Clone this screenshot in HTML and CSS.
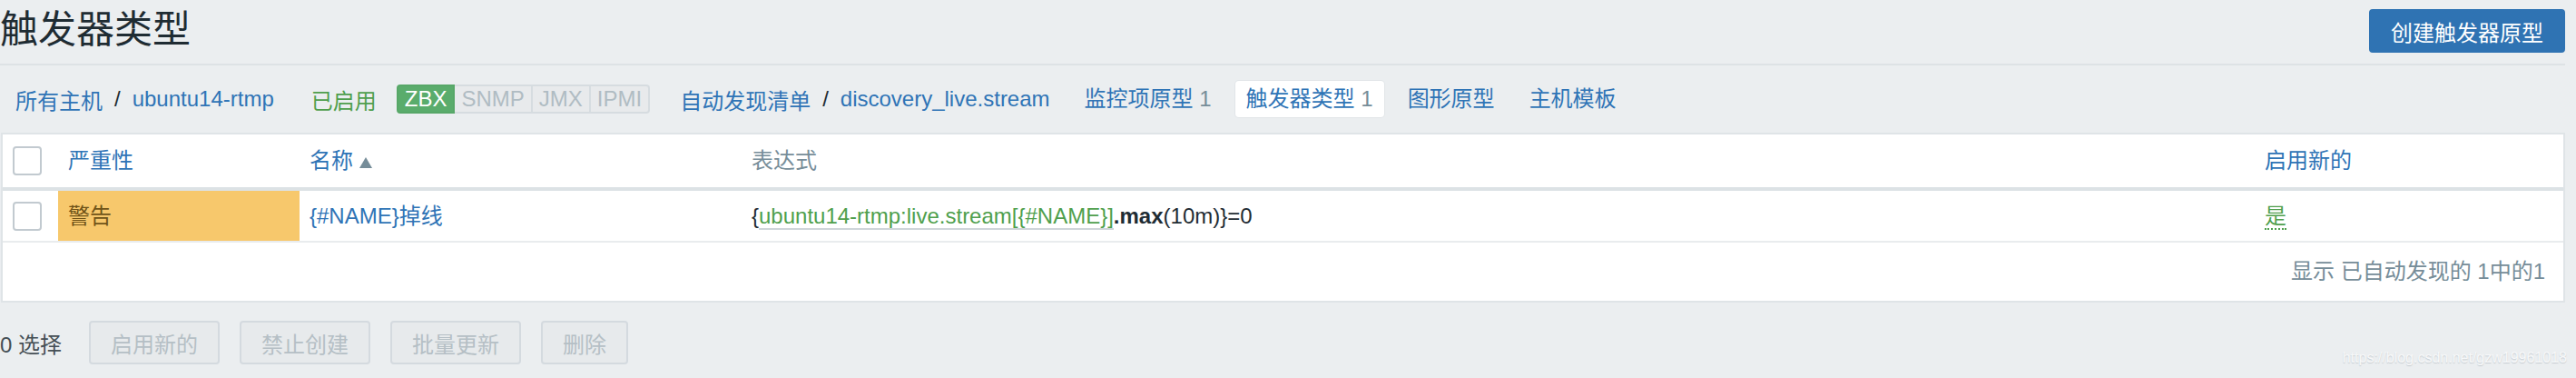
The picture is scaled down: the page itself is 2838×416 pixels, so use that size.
FILE: index.html
```html
<html lang="zh-CN">
<head>
    <meta charset="UTF-8">
    <title>触发器类型</title>
    <link rel="stylesheet" href="styles.css">
</head>
<body>
    <div class="page">
        <header class="page-header">
            <h1>触发器类型</h1>
            <button class="btn-create">创建触发器原型</button>
        </header>

        <nav class="host-nav">
            <div class="crumbs first">
                <a href="#">所有主机</a>
                <span class="sep">/</span>
                <a href="#">ubuntu14-rtmp</a>
            </div>
            <span class="status-on">已启用</span>
            <div class="tags">
                <span class="tag tag-on">ZBX</span>
                <span class="tag">SNMP</span>
                <span class="tag">JMX</span>
                <span class="tag">IPMI</span>
            </div>
            <div class="crumbs second">
                <a href="#">自动发现清单</a>
                <span class="sep">/</span>
                <a href="#">discovery_live.stream</a>
            </div>
            <ul class="tabs">
                <li><a href="#">监控项原型 <sup>1</sup></a></li>
                <li class="active"><a href="#">触发器类型 <sup>1</sup></a></li>
                <li><a href="#">图形原型</a></li>
                <li><a href="#">主机模板</a></li>
            </ul>
        </nav>

        <div class="table-box">
            <table class="list">
                <colgroup>
                    <col class="c-check">
                    <col class="c-sev">
                    <col class="c-name">
                    <col class="c-expr">
                    <col>
                </colgroup>
                <thead>
                    <tr>
                        <th><span class="checkbox"></span></th>
                        <th><a href="#">严重性</a></th>
                        <th><a href="#">名称</a><span class="arrow-up"></span></th>
                        <th class="muted">表达式</th>
                        <th><a href="#">启用新的</a></th>
                    </tr>
                </thead>
                <tbody>
                    <tr>
                        <td><span class="checkbox"></span></td>
                        <td class="sev-warning">警告</td>
                        <td><a href="#">{#NAME}掉线</a></td>
                        <td class="expr">{<a href="#" class="item-link">ubuntu14-rtmp:live.stream[{#NAME}]</a><b>.max</b>(10m)}=0</td>
                        <td><a href="#" class="yes">是</a></td>
                    </tr>
                </tbody>
            </table>
            <div class="paging">显示 已自动发现的 1中的1</div>
        </div>

        <div class="actions">
            <span class="selected">0 选择</span>
            <button class="btn-off" disabled>启用新的</button>
            <button class="btn-off" disabled>禁止创建</button>
            <button class="btn-off" disabled>批量更新</button>
            <button class="btn-off" disabled>删除</button>
        </div>
    </div>

    <div class="watermark">https://blog.csdn.net/gzw19961018</div>
</body>
</html>
```

FILE: styles.css
```css
body{
    margin: 0;
    background-color: #ebeef0;
    color: #1f2c33;
    font-family: "Liberation Sans", "Noto Sans CJK SC", sans-serif;
    font-size: 24px;
}
a{
    color: #2f74b6;
    text-decoration: none;
}
.page{
    width: 2826px;
}

/* 标题 */
.page-header{
    display: flex;
    justify-content: space-between;
    align-items: flex-start;
    height: 72px;
    padding-top: 10px;
    box-sizing: border-box;
    border-bottom: 2px solid #dde2e5;
}
h1{
    margin: 0;
    font-size: 42px;
    font-weight: normal;
    line-height: 46px;
    letter-spacing: 0;
}
.btn-create{
    height: 48px;
    padding: 0 22px;
    border: 2px solid #2f73b3;
    border-radius: 4px;
    background-color: #2f73b3;
    color: #fff;
    font-family: inherit;
    font-size: 24px;
}

/* 主机导航 */
.host-nav{
    display: flex;
    align-items: center;
    height: 74px;
    padding-left: 17px;
}
.crumbs{
    display: flex;
    align-items: center;
    white-space: nowrap;
}
.crumbs .sep{
    margin: 0 13px;
    color: #1f2c33;
}
.crumbs.second{
    margin-left: 33px;
}
.status-on{
    margin-left: 41px;
    color: #4f9f4d;
}
.tags{
    display: flex;
    margin-left: 22px;
}
.tag{
    height: 32px;
    line-height: 28px;
    padding: 0 7px;
    margin-left: -2px;
    box-sizing: border-box;
    border: 2px solid #d6dce0;
    background-color: #e8eaec;
    color: #b0bcc3;
}
.tags .tag:last-child{
    border-radius: 0 4px 4px 0;
}
.tag-on{
    margin-left: 0;
    border-color: #57a768;
    border-radius: 4px 0 0 4px;
    background-color: #5aac6c;
    color: #fff;
    position: relative;
}
.tabs{
    display: flex;
    gap: 14px;
    margin: 0 0 0 26px;
    padding: 0;
    list-style: none;
}
.tabs a{
    display: block;
    height: 40px;
    line-height: 40px;
    padding: 0 12px;
    border-radius: 4px;
    white-space: nowrap;
}
.tabs sup{
    vertical-align: baseline;
    font-size: 24px;
    color: #768d99;
}
.tabs .active a{
    background-color: #fff;
    box-shadow: 0 0 0 1px #e1e5e8;
}

/* 列表 */
.table-box{
    margin-left: 1px;
    border: 2px solid #dfe4e7;
    background-color: #fff;
}
.list{
    width: 100%;
    border-collapse: collapse;
    table-layout: fixed;
    font-size: 24px;
    color: #1f2c33;
}
.c-check{ width: 61px; }
.c-sev{ width: 266px; }
.c-name{ width: 487px; }
.c-expr{ width: 1667px; }
.list th,
.list td{
    padding: 0 11px;
    line-height: 28px;
    text-align: left;
    font-weight: normal;
    white-space: nowrap;
    vertical-align: middle;
}
.list thead tr{
    height: 60px;
    border-bottom: 4px solid #dce2e5;
}
.list tbody tr{
    height: 58px;
    border-bottom: 2px solid #e9ecee;
}
.list .muted{
    color: #768d99;
}
.checkbox{
    display: block;
    width: 32px;
    height: 32px;
    box-sizing: border-box;
    border: 2px solid #c2cad0;
    border-radius: 4px;
    background: #fff;
}
.arrow-up{
    display: inline-block;
    margin-left: 7px;
    border-left: 7px solid transparent;
    border-right: 7px solid transparent;
    border-bottom: 12px solid #768d99;
}
.sev-warning{
    background-color: #f7c86c;
    color: #6f5318;
}
.expr b{
    font-weight: bold;
}
.item-link{
    color: #4f9f4d;
    border-bottom: 2px solid #cfd5d9;
}
.yes{
    color: #4f9f4d;
    border-bottom: 2px dotted #4f9f4d;
}
.paging{
    height: 64px;
    line-height: 64px;
    padding-right: 20px;
    text-align: right;
    color: #768d99;
}

/* 批量操作 */
.actions{
    display: flex;
    align-items: center;
    margin-top: 20px;
}
.selected{
    margin-right: 30px;
    color: #454f55;
}
.btn-off{
    height: 48px;
    margin-right: 22px;
    padding: 0 22px;
    border: 2px solid #d4dadf;
    border-radius: 4px;
    background-color: #e7eaec;
    color: #b5bfc5;
    font-family: inherit;
    font-size: 24px;
}

.watermark{
    position: absolute;
    top: 385px;
    right: 10px;
    font-size: 16px;
    color: #f7f8f9;
    text-shadow: 0 1px 1px #c4cacf;
}
```
